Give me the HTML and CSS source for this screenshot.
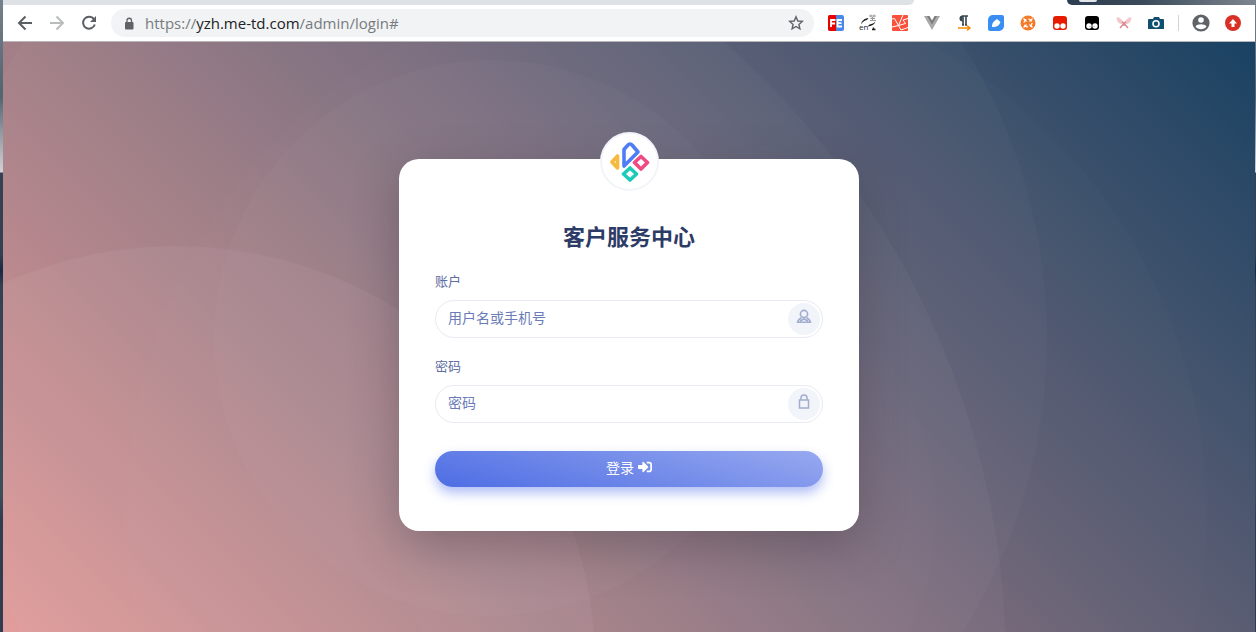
FILE: index.html
```html
<!DOCTYPE html>
<html lang="zh-CN">
<head>
<meta charset="utf-8">
<title>客户服务中心</title>
<link rel="stylesheet" href="styles.css">
</head>
<body>
<div class="desktop">
<div class="browser">
  <div class="tabstrip">
    <div class="tabs-inactive"></div>
    <div class="tab-active"></div>
    <div class="titlebar"><span class="titlebar-dot"></span></div>
  </div>
  <header class="toolbar">
    <button class="tool" type="button" aria-label="Back"><svg width="18" height="18" viewBox="0 0 18 18" fill="none" stroke="#5b5f64" stroke-width="2"><path d="M16 9H3M9.500 2.500 3 9l6.500 6.500"/></svg></button>
    <button class="tool" type="button" aria-label="Forward"><svg width="18" height="18" viewBox="0 0 18 18" fill="none" stroke="#b9bbbd" stroke-width="2"><path d="M2 9h13M8.500 2.500 15 9l-6.500 6.500"/></svg></button>
    <button class="tool" type="button" aria-label="Reload"><svg width="18" height="18" viewBox="0 0 18 18"><path d="M14 5.200A6 6 0 1 0 14.800 10.500" fill="none" stroke="#5b5f64" stroke-width="2"/><path d="M16 2v6h-6z" fill="#5b5f64"/></svg></button>
    <div class="omnibox">
      <svg width="10" height="13" viewBox="0 0 10 13"><rect x="1" y="5" width="8.500" height="7.500" rx="1" fill="#5f6368"/><path d="M3 5.500V3.500a2.250 2.250 0 0 1 4.500 0v2" fill="none" stroke="#5f6368" stroke-width="1.300"/></svg>
      <div class="url">https://<span class="host">yzh.me-td.com</span>/admin/login#</div>
      <button class="star" type="button" aria-label="Bookmark"><svg width="16" height="16" viewBox="0 0 16 16"><path d="M8 1.800 9.800 6l4.500.400-3.400 3 1 4.400L8 11.500l-3.900 2.300 1-4.400-3.400-3L6.200 6z" fill="none" stroke="#5f6368" stroke-width="1.400"/></svg></button>
    </div>
    <div class="extensions">
      <button class="tool" type="button" aria-label="FE"><svg width="16" height="16" viewBox="0 0 16 16"><rect width="16" height="16" rx="2" fill="#4a88e8"/><path d="M2 0h6v16H2a2 2 0 0 1-2-2V2a2 2 0 0 1 2-2z" fill="#e60000"/><path d="M3 12V5h4.500M3 8.500h4M14 5H9.500v6.500H14M9.500 8.200h4" fill="none" stroke="#fff" stroke-width="1.800"/></svg></button>
      <button class="tool" type="button" aria-label="Translate"><svg width="18" height="20" viewBox="0 0 18 20"><path d="M2 11.500C2.500 8 5 5.500 9.500 5L8 7C5.500 7.500 3.500 9 2 11.500zM16.500 8.500c-1 3-3.500 4.500-8 5l2-2c2.500-.5 4.500-1.500 6-3z" fill="#222"/><path d="M10 3h7M12 1.500v3M15 1.500v3M11.500 5.500h4.500M13.500 4v4M11 7.500h6" stroke="#999" fill="none"/><text class="mini-en" x="0" y="17">en</text><path d="M13 16.500h3.500M14.500 14.500v2" stroke="#222" stroke-width="1.500"/></svg></button>
      <button class="tool" type="button" aria-label="Laravel"><svg width="16" height="16" viewBox="0 0 16 16"><rect width="16" height="16" rx="1" fill="#fb503b"/><path d="M0 4 2.500 3.500l4 7 7-2L11 5l5-1.500M0 12l6.500-1.500L9 15l7-2.500M11 0 6.500 10.500" stroke="#fff" stroke-width="1" fill="none"/></svg></button>
      <button class="tool" type="button" aria-label="Vue"><svg width="16" height="16" viewBox="0 0 16 16"><path d="M0 1h5l3 5 3-5h5L8 15z" fill="#a9a9a9"/><path d="M3 1h3l2 3.500L10 1h3L8 9.500z" fill="#7d7d7d"/><path d="M5.500 1H7l1 2 1-2h1.500L8 5.500z" fill="#fff"/></svg></button>
      <button class="tool" type="button" aria-label="Paragraph"><svg width="16" height="18" viewBox="0 0 16 18"><path d="M12 2H6M7 2v9M10 2v9M6 11h2M9 11h2" stroke="#37474f" stroke-width="1.600" fill="none"/><path d="M6.500 1.500a3 3 0 0 0 0 6z" fill="#37474f"/><path d="M2 14h11M11 11.500l3 2.500-3 2.500" stroke="#fb8c00" stroke-width="1.500" fill="none"/></svg></button>
      <button class="tool" type="button" aria-label="Pen"><svg width="16" height="16" viewBox="0 0 16 16"><path d="M5 0h9a2 2 0 0 1 2 2v9a5 5 0 0 1-5 5H2a2 2 0 0 1-2-2V5a5 5 0 0 1 5-5z" fill="#3a8df2"/><path d="M4 12c0-4 1-5 5-8l3.500 3C11 11 9 12 4 12z" fill="#fff"/></svg></button>
      <button class="tool" type="button" aria-label="Target"><svg width="16" height="16" viewBox="0 0 16 16"><circle cx="8" cy="8" r="7.500" fill="#f47b2a"/><circle cx="8" cy="8" r="4" fill="none" stroke="#fff" stroke-width="1.300" stroke-dasharray="4 2.280"/><path d="m3.500 3.500 3 3M9.500 9.500l3 3M12.500 3.500l-3 3M6.500 9.500l-3 3" stroke="#fff" stroke-width="1.200"/></svg></button>
      <button class="tool" type="button" aria-label="Red monkey"><svg width="16" height="16" viewBox="0 0 16 16"><rect x="1" y="1" width="14" height="14" rx="3" fill="#e61b00"/><circle cx="5" cy="11" r="2.700" fill="#fff"/><circle cx="11" cy="11" r="2.700" fill="#fff"/></svg></button>
      <button class="tool" type="button" aria-label="Black monkey"><svg width="16" height="16" viewBox="0 0 16 16"><rect x="1" y="1" width="14" height="14" rx="3" fill="#000"/><circle cx="5" cy="11" r="2.700" fill="#fff"/><circle cx="11" cy="11" r="2.700" fill="#fff"/><path d="M6 11v1M10 11v1" stroke="#999"/></svg></button>
      <button class="tool" type="button" aria-label="Butterfly"><svg width="16" height="16" viewBox="0 0 16 16"><path d="M1 2c4 1 6 4 7 7 1-3 3-6 7-7 1 4-2 8-7 7-5 1-8-3-7-7z" fill="#f3c6cb"/><path d="m4 13 4-4.500 4 4.500M8 8.500 6 6.500M8 8.500l2-2" stroke="#e58b95" stroke-width="1.600" fill="none"/><path d="M8 8v3" stroke="#999"/></svg></button>
      <button class="tool" type="button" aria-label="Camera"><svg width="16" height="16" viewBox="0 0 16 16"><path d="M1 4h4l1-2h5l1 2h3a1 1 0 0 1 1 1v9H0V5a1 1 0 0 1 1-1z" fill="#0f4f70"/><circle cx="8" cy="8.700" r="3" fill="none" stroke="#fff" stroke-width="1.600"/></svg></button>
    </div>
    <div class="divider"></div>
    <button class="tool" type="button" aria-label="Profile"><svg width="18" height="18" viewBox="0 0 18 18"><circle cx="9" cy="9" r="8.600" fill="#5f6368"/><circle cx="9" cy="6" r="2.800" fill="#fff"/><path d="M3.500 12.500c1.500-3 9.500-3 11 0-2.500 3.500-8.500 3.500-11 0z" fill="#fff"/></svg></button>
    <button class="tool" type="button" aria-label="Update"><svg width="16" height="16" viewBox="0 0 16 16"><circle cx="8" cy="8" r="8" fill="#d93025"/><path d="M8 4 4 8.500h2.500V12h3V8.500H12z" fill="#fff"/></svg></button>
  </header>

  <main class="page">
    <svg class="rings" width="1252" height="590" fill="#fff" fill-opacity=".025" aria-hidden="true">
      <circle cx="173" cy="623" r="830" fill-opacity=".03"/><circle cx="173" cy="623" r="419" fill-opacity=".05"/>
      <circle cx="489" cy="296" r="555"/><circle cx="489" cy="296" r="278"/>
      <circle cx="663" cy="473" r="541" fill-opacity=".01"/><circle cx="663" cy="473" r="270" fill-opacity=".01"/>
    </svg>
    <form class="card">
      <div class="logo">
        <svg width="40" height="40" viewBox="0 0 40 40" fill="none" stroke-width="3.600" stroke-linejoin="round">
          <path d="M14 7.500 17.500 3.500q2.500-3 5 0L28 10 14 24z" stroke="#4f7df5"/>
          <path d="m2 20 5.500-6v12z" stroke="#f7b93e"/>
          <path d="m24.500 20.500 6.500-6 6.500 6-6.500 6.500z" stroke="#ef4a81"/>
          <path d="m13.500 32 6.500-6 6.500 6-6.500 6z" stroke="#1dccb8"/>
        </svg>
      </div>
      <h1 class="title">客户服务中心</h1>
      <label class="label" for="account">账户</label>
      <div class="field">
        <input class="input" id="account" type="text" placeholder="用户名或手机号">
        <span class="badge"><svg width="16" height="16" viewBox="0 0 16 16" fill="none" stroke="#a2add0" stroke-width="1.600"><circle cx="8" cy="5" r="3.600"/><path d="M5.500 8.800C3 10 2 11 1.600 13.200h12.800C14 11 13 10 10.500 8.800M4 12l4-2 4 2"/></svg></span>
      </div>
      <label class="label" for="password">密码</label>
      <div class="field">
        <input class="input" id="password" type="password" placeholder="密码">
        <span class="badge"><svg width="16" height="16" viewBox="0 0 16 16" fill="none" stroke="#a2add0" stroke-width="1.500"><path d="M3.500 6h9v8h-9zM5 6V4a3 3 0 0 1 6 0v2"/></svg></span>
      </div>
      <button class="submit" type="submit">登录 <svg width="14" height="14" viewBox="0 0 512 512" fill="#fff"><path d="M416 448h-84c-7 0-12-5-12-12v-40c0-7 5-12 12-12h84c18 0 32-14 32-32V160c0-18-14-32-32-32h-84c-7 0-12-5-12-12V76c0-7 5-12 12-12h84c53 0 96 43 96 96v192c0 53-43 96-96 96zm-47-209L201 71c-15-15-41-5-41 17v96H24c-13 0-24 11-24 24v96c0 13 11 24 24 24h136v96c0 22 26 32 41 17l168-168c9-9 9-25 0-34z"/></svg></button>
    </form>
  </main>
</div>
</div>
</body>
</html>
```
FILE: styles.css
```css
* { box-sizing: border-box; }

body {
  margin: 0;
  font-family: "Open Sans", "Noto Sans CJK SC", sans-serif;
}

button {
  border: 0;
  padding: 0;
  background: none;
  font: inherit;
}

.desktop {
  display: flex;
  min-height: 100vh;
  padding: 0 1px 0 3px;
  background: linear-gradient(#75818c 0, #53646f 96px, #d0d3d7 172px, #344152 173px, #344152 254px, #152a45 270px, #344152 286px, #3c4d5b 496px, #303c50 520px);
}

.browser {
  flex: 1;
  display: flex;
  flex-direction: column;
  min-width: 0;
}

.tabstrip {
  display: flex;
  height: 5px;
  background: #fff;
}

.tabs-inactive {
  flex: 911;
  background: #dee1e6;
  border-bottom-right-radius: 5px;
}

.tab-active { flex: 153; }

.titlebar {
  flex: 188;
  overflow: hidden;
  background: linear-gradient(90deg, #2b3d50, #3b4a5a 40%, #7d868f);
  border-bottom-left-radius: 6px;
}

.titlebar-dot {
  display: block;
  width: 18px;
  height: 2px;
  margin-left: 12px;
  background: #e1e4e8;
  border-radius: 0 0 9px 9px;
}

.toolbar {
  display: flex;
  align-items: center;
  height: 37px;
  padding: 0 6px;
  background: #fff;
  border-bottom: 1px solid #b8b5b9;
}

.tool {
  display: flex;
  align-items: center;
  justify-content: center;
  width: 32px;
  height: 32px;
}

.omnibox {
  flex: 1;
  display: flex;
  align-items: center;
  height: 28px;
  margin: 0 6px;
  padding: 0 10px 0 13px;
  background: #f1f3f4;
  border-radius: 14px;
}

.url {
  flex: 1;
  margin-left: 11px;
  color: #777b80;
  font-size: 15px;
  line-height: 20px;
}

.host { color: #202124; }

.star { display: flex; }

.extensions { display: flex; }

.mini-en {
  font-size: 8px;
  fill: #222;
}

.divider {
  width: 1px;
  height: 16px;
  margin: 0 6px;
  background: #d0d3d6;
}

.page {
  position: relative;
  flex: 1;
  padding: 117px 16px 101px;
  overflow: hidden;
  background: linear-gradient(45deg, #df9593, #1a4263);
}

.rings {
  position: absolute;
  top: 0;
  left: 0;
}

.card {
  position: relative;
  max-width: 460px;
  margin: 0 auto;
  padding: 59px 36px 44px;
  background: #fff;
  border-radius: 20px;
  box-shadow: 0 16px 48px rgba(50, 40, 50, .32);
}

.logo {
  position: absolute;
  top: -27px;
  left: 50%;
  display: flex;
  align-items: center;
  justify-content: center;
  width: 59px;
  height: 59px;
  margin-left: -29px;
  background: #fff;
  border: 2px solid #f1f4f9;
  border-radius: 50%;
}

.title {
  margin: 0 0 19px;
  color: #2d3b67;
  font-size: 22px;
  line-height: 36px;
  text-align: center;
}

.label {
  display: block;
  margin-bottom: 11px;
  color: #5d6da0;
  font-size: 13px;
  line-height: 16px;
}

.field {
  position: relative;
  margin-bottom: 20px;
}

.input {
  display: block;
  width: 100%;
  height: 38px;
  padding: 0 48px 4px 12px;
  color: #6a7bb8;
  font: inherit;
  font-size: 14px;
  background: #fff;
  border: 1px solid #e8eaf4;
  border-radius: 19px;
}

.input::placeholder {
  color: #6a7bb8;
  opacity: 1;
}

.badge {
  position: absolute;
  top: 3px;
  right: 3px;
  display: flex;
  align-items: center;
  justify-content: center;
  width: 32px;
  height: 32px;
  padding-bottom: 4px;
  background: #f1f4f9;
  border-radius: 50%;
}

.submit {
  display: flex;
  align-items: center;
  justify-content: center;
  gap: 4px;
  width: 100%;
  height: 36px;
  margin-top: 28px;
  padding-bottom: 4px;
  color: #fff;
  font-size: 14px;
  background: linear-gradient(15deg, #4d6de3, #98a9f0);
  border-radius: 18px;
  box-shadow: 0 6px 12px rgba(80, 110, 235, .45);
}
```
